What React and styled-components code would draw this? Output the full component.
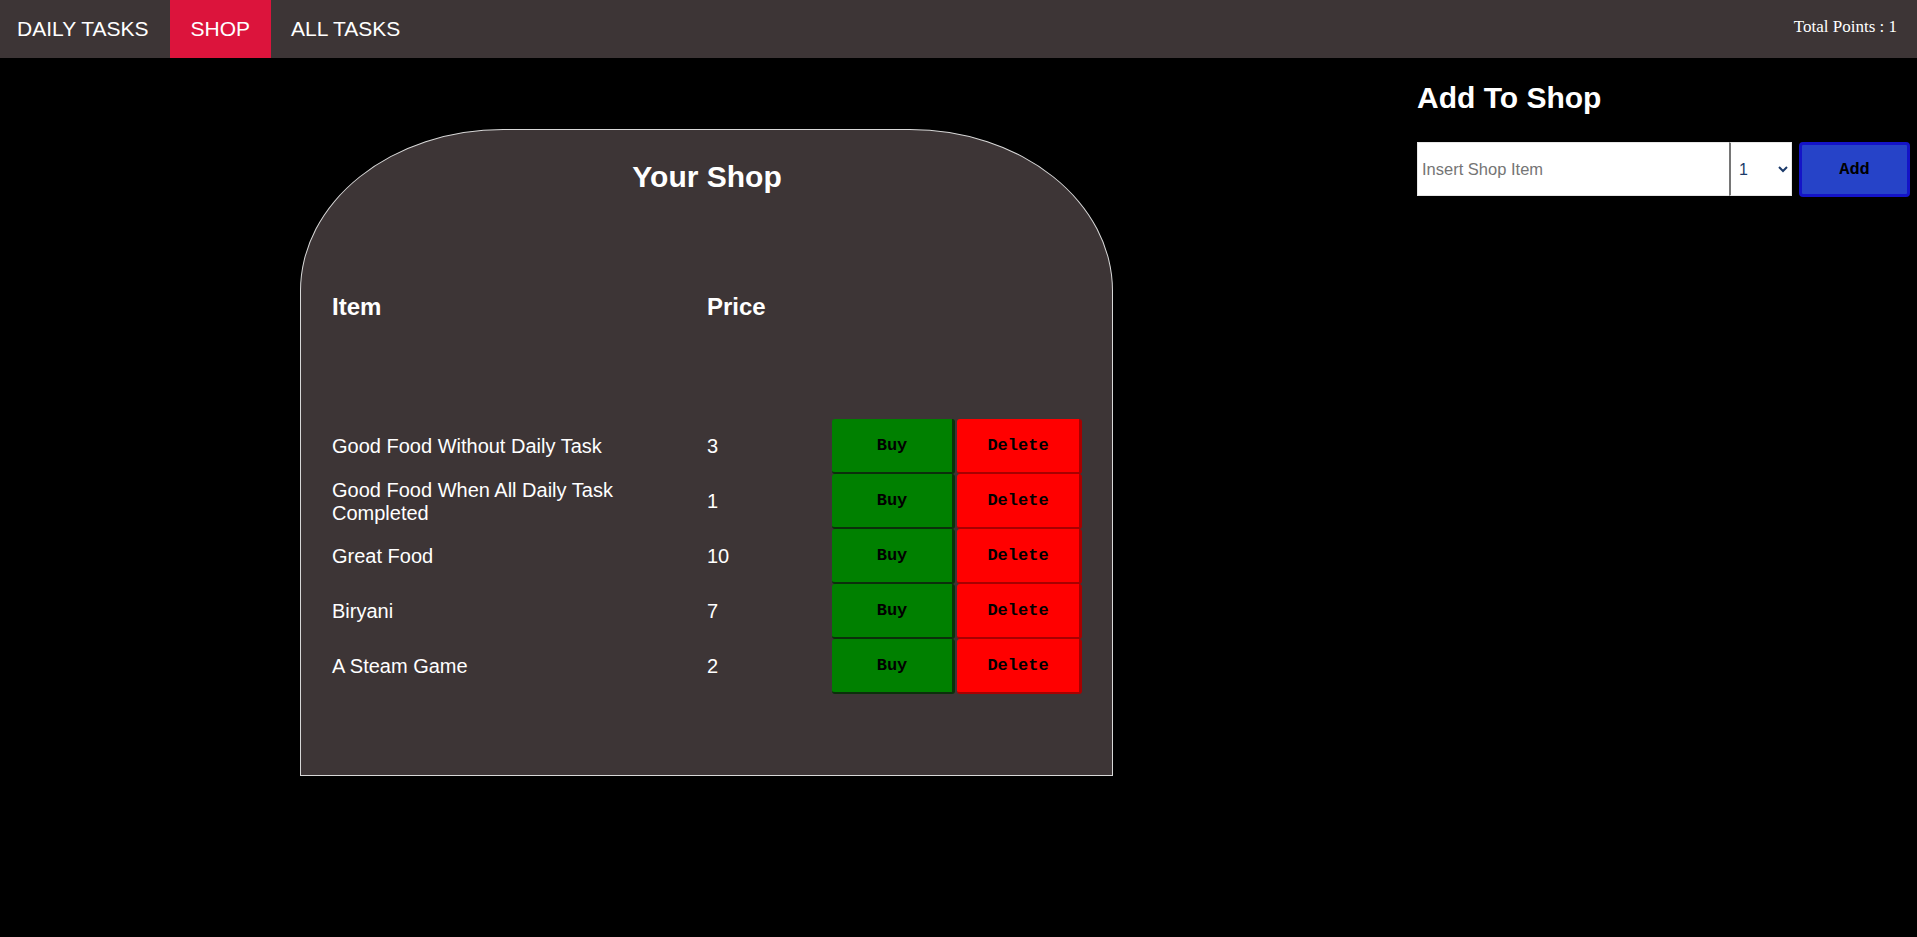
import React from "react";
import styled, { createGlobalStyle } from "styled-components";

const GlobalStyle = createGlobalStyle`
  html, body {
    margin: 0;
    padding: 0;
    background: #000;
    min-height: 100%;
  }
  body {
    font-family: "Liberation Sans", Arial, sans-serif;
    color: #fff;
  }
  * { box-sizing: border-box; }
`;

const Page = styled.div`
  min-height: 937px;
  background: #000;
`;

const Nav = styled.nav`
  display: flex;
  align-items: stretch;
  height: 58px;
  background: #3d3536;
`;

const NavList = styled.ul`
  display: flex;
  margin: 0;
  padding: 0;
  list-style: none;
`;

const NavLink = styled.a`
  display: flex;
  align-items: center;
  height: 100%;
  padding: 0 20.5px;
  font-size: 21px;
  color: #fff;
  text-decoration: none;
  text-transform: uppercase;
  background: ${(p) => (p.$active ? "#dc143c" : "transparent")};
  li:first-child > & {
    padding: 0 21.5px 0 17px;
  }
`;

const Points = styled.div`
  margin-left: auto;
  padding: 17px 20px 0 0;
  font-family: "Liberation Serif", "Times New Roman", serif;
  font-size: 17px;
  color: #fff;
`;

const Main = styled.main`
  display: grid;
  grid-template-columns: 1fr 504px;
  align-items: start;
`;

const ShopArea = styled.section`
  display: flex;
  justify-content: center;
  padding-top: 71px;
`;

const ShopCard = styled.div`
  width: 813px;
  background: #3d3536;
  border: 1px solid #d8d8d8;
  border-radius: 25% 25% 0 0;
  padding: 30px 30px 81px 31px;
`;

const CardTitle = styled.h2`
  margin: 0 0 100px 0;
  text-align: center;
  font-size: 30px;
  line-height: 34px;
  font-weight: bold;
  color: #fff;
`;

const TableGrid = styled.div`
  display: grid;
  grid-template-columns: 375px 125px 250px;
`;

const HeaderCell = styled.div`
  font-size: 24px;
  line-height: 26px;
  font-weight: bold;
  color: #fff;
  margin-bottom: 99px;
`;

const Cell = styled.div`
  display: flex;
  align-items: center;
  height: 55px;
  font-size: 20px;
  line-height: 23px;
  color: #fff;
`;

const Actions = styled.div`
  display: grid;
  grid-template-columns: 123px 125px;
  gap: 2px;
  height: 55px;
`;

const ActionButton = styled.button`
  height: 55px;
  margin: 0;
  padding: 0;
  border: none;
  border-right: 3px solid ${(p) => (p.$variant === "buy" ? "#0b300b" : "#a80000")};
  border-bottom: 2px solid ${(p) => (p.$variant === "buy" ? "#0b300b" : "#a80000")};
  border-radius: 3px;
  background: ${(p) => (p.$variant === "buy" ? "#008000" : "#ff0000")};
  color: #000;
  font-family: "Liberation Mono", "Courier New", monospace;
  font-weight: bold;
  font-size: 17px;
  cursor: pointer;
`;

const Sidebar = styled.aside`
  padding: 23px 7px 0 4px;
`;

const SideTitle = styled.h2`
  margin: 0 0 27px 0;
  font-size: 30px;
  line-height: 34px;
  font-weight: bold;
  color: #fff;
`;

const AddForm = styled.form`
  display: flex;
  align-items: stretch;
  gap: 7px;
`;

const FieldGroup = styled.div`
  display: flex;
  height: 54px;
`;

const ItemInput = styled.input`
  width: 312px;
  height: 54px;
  border: 1px solid #e6e6e6;
  border-right: none;
  padding: 0 4px;
  font-family: "Liberation Sans", Arial, sans-serif;
  font-size: 16.5px;
  color: #000;
  background: #fff;
  outline: none;
  &::placeholder { color: #757575; }
`;

const PriceSelect = styled.select`
  width: 63px;
  height: 54px;
  border: 1px solid #e6e6e6;
  border-left: 2px solid #767676;
  padding: 0 4px;
  font-family: "Liberation Sans", Arial, sans-serif;
  font-size: 16px;
  color: #1b3a6a;
  background: #fff;
  outline: none;
`;

const AddButton = styled.button`
  width: 111px;
  height: 55px;
  background: #2643c8;
  border: 3px solid #1414c8;
  border-radius: 4px;
  color: #000;
  font-family: "Liberation Mono", "Courier New", monospace;
  font-weight: bold;
  font-size: 17px;
  cursor: pointer;
`;

const items = [
  { name: "Good Food Without Daily Task", price: 3 },
  { name: "Good Food When All Daily Task Completed", price: 1 },
  { name: "Great Food", price: 10 },
  { name: "Biryani", price: 7 },
  { name: "A Steam Game", price: 2 },
];

export default function App() {
  return (
    <Page>
      <GlobalStyle />
      <Nav>
        <NavList>
          <li><NavLink href="#">Daily Tasks</NavLink></li>
          <li><NavLink href="#" $active>Shop</NavLink></li>
          <li><NavLink href="#">All Tasks</NavLink></li>
        </NavList>
        <Points>Total Points : 1</Points>
      </Nav>
      <Main>
        <ShopArea>
          <ShopCard>
            <CardTitle>Your Shop</CardTitle>
            <TableGrid>
              <HeaderCell>Item</HeaderCell>
              <HeaderCell>Price</HeaderCell>
              <HeaderCell />
              {items.map((it) => (
                <React.Fragment key={it.name}>
                  <Cell>{it.name}</Cell>
                  <Cell>{it.price}</Cell>
                  <Actions>
                    <ActionButton $variant="buy">Buy</ActionButton>
                    <ActionButton $variant="delete">Delete</ActionButton>
                  </Actions>
                </React.Fragment>
              ))}
            </TableGrid>
          </ShopCard>
        </ShopArea>
        <Sidebar>
          <SideTitle>Add To Shop</SideTitle>
          <AddForm onSubmit={(e) => e.preventDefault()}>
            <FieldGroup>
              <ItemInput placeholder="Insert Shop Item" />
              <PriceSelect defaultValue="1">
                {Array.from({ length: 10 }, (_, i) => (
                  <option key={i + 1} value={i + 1}>{i + 1}</option>
                ))}
              </PriceSelect>
            </FieldGroup>
            <AddButton type="submit">Add</AddButton>
          </AddForm>
        </Sidebar>
      </Main>
    </Page>
  );
}
